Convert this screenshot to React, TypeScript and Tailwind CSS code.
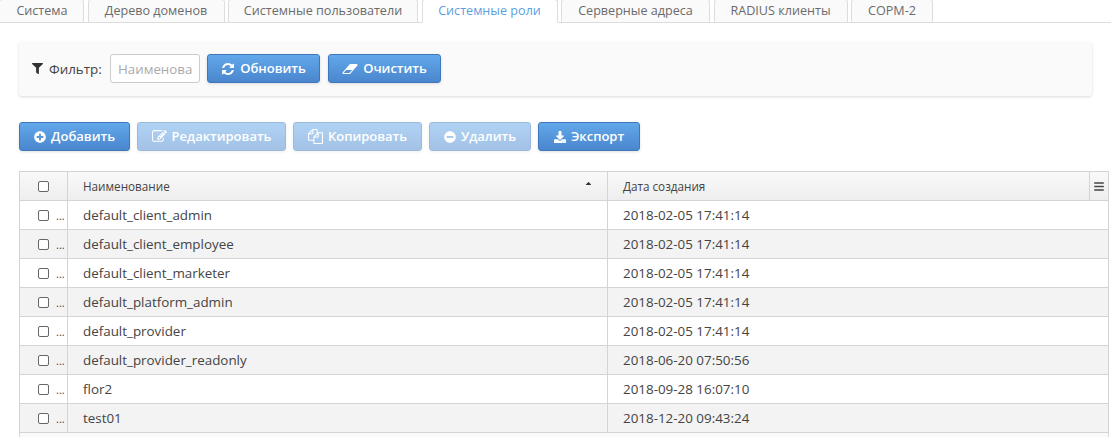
import { FaFilter, FaPlusCircle, FaMinusCircle, FaDownload, FaBars, FaSortUp } from "react-icons/fa";
import type { ReactNode } from "react";

const tabs = [
  ["Система", "w-[85px] -ml-px pl-px"],
  ["Дерево доменов", "w-[137px]"],
  ["Системные пользователи", "w-[190px]"],
  ["Системные роли", "w-[136px]"],
  ["Серверные адреса", "w-[149px]"],
  ["RADIUS клиенты", "w-[134px]"],
  ["СОРМ-2", "w-[82px]"],
];
const rows = [
  ["default_client_admin", "2018-02-05 17:41:14"],
  ["default_client_employee", "2018-02-05 17:41:14"],
  ["default_client_marketer", "2018-02-05 17:41:14"],
  ["default_platform_admin", "2018-02-05 17:41:14"],
  ["default_provider", "2018-02-05 17:41:14"],
  ["default_provider_readonly", "2018-06-20 07:50:56"],
  ["flor2", "2018-09-28 16:07:10"],
  ["test01", "2018-12-20 09:43:24"],
];

function Glyph({ d, w = 1792, h = 1792, cls }: { d: string; w?: number; h?: number; cls: string }) {
  return (
    <svg viewBox={`0 0 ${w} ${h}`} className={cls} fill="currentColor">
      <path d={d} />
    </svg>
  );
}

const refresh = "M1639 1056q0 5-1 7-64 268-268 434.5t-478 166.5q-146 0-282.5-55t-243.5-157l-129 129q-19 19-45 19t-45-19-19-45v-448q0-26 19-45t45-19h448q26 0 45 19t19 45-19 45l-137 137q71 66 161 102t187 36q134 0 250-65t186-179q11-17 53-117 8-23 30-23h192q13 0 22.5 9.5t9.5 22.5zm25-800v448q0 26-19 45t-45 19h-448q-26 0-45-19t-19-45 19-45l138-138q-148-137-349-137-134 0-250 65t-186 179q-11 17-53 117-8 23-30 23h-199q-13 0-22.5-9.5t-9.5-22.5v-7q65-268 270-434.5t480-166.5q146 0 284 55.5t245 156.5l130-129q19-19 45-19t45 19 19 45z";
const eraser = "M960 1408l336-384h-768l-336 384h768zm1013-1077q15 34 9.5 71.5t-30.5 65.5l-896 1024q-38 44-96 44h-768q-38 0-69.5-20.5t-47.5-54.5q-15-34-9.5-71.5t30.5-65.5l896-1024q38-44 96-44h768q38 0 70 20.5t47 54.5z";
const edit = "M888 1184l116-116-152-152-116 116v56h96v96h56zm440-720q-16-16-33 1l-350 350q-17 17-1 33t33-1l350-350q17-17 1-33zm80 594v190q0 119-84.5 203.5t-203.5 84.5h-832q-119 0-203.5-84.5t-84.5-203.5v-832q0-119 84.5-203.5t203.5-84.5h832q63 0 117 25 15 7 18 23 3 17-9 29l-49 49q-14 14-32 8-23-6-45-6h-832q-66 0-113 47t-47 113v832q0 66 47 113t113 47h832q66 0 113-47t47-113v-126q0-13 9-22l64-64q15-15 35-7t20 29zm-96-738l288 288-672 672h-288v-288zm444 132l-92 92-288-288 92-92q28-28 68-28t68 28l152 152q28 28 28 68t-28 68z";
const files = "M1696 384q40 0 68 28t28 68v1216q0 40-28 68t-68 28h-960q-40 0-68-28t-28-68v-288h-544q-40 0-68-28t-28-68v-672q0-40 20-88t48-76l408-408q28-28 76-48t88-20h416q40 0 68 28t28 68v328q68-40 128-40h416zm-544 213l-299 299h299v-299zm-640-384l-299 299h299v-299zm196 647l316-316v-416h-384v416q0 40-28 68t-68 28h-416v640h512v-256q0-40 20-92t48-80zm956 804v-1152h-384v416q0 40-28 68t-68 28h-416v640h896z";

function Btn({ icon, children, off, w }: { icon: ReactNode; children: ReactNode; off?: boolean; w: string }) {
  return (
    <button className={`flex h-[29px] shrink-0 items-center justify-center gap-[5px] rounded-[3px] border border-[#3f78b8] bg-gradient-to-b from-[#62a8ea] to-[#4a86ce] text-[13px] font-semibold text-white shadow-[0_1px_3px_rgba(0,0,0,0.12)] ${w} ${off ? "opacity-50" : ""}`}>
      {icon}
      {children}
    </button>
  );
}

function Box() {
  return <span className="block h-[11px] w-[11px] shrink-0 rounded-[2px] border border-[#666] bg-white" />;
}

export default function App() {
  return (
    <div className="h-[437px] w-[1111px] overflow-hidden bg-white font-['Open_Sans',sans-serif] text-[#444]">
      <div className="flex h-[23px] gap-[3.5px] border-b border-[#ddd]">
        {tabs.map(([t, w], i) => (
          <div key={t} className={`-mt-px flex h-[24px] shrink-0 items-center justify-center rounded-t-[3px] border border-[#ddd] text-[12.6px] ${w} ${i === 3 ? "border-b-white bg-white text-[#5b9fe0]" : "bg-[#fafafa] text-[#6b6b6b]"}`}>
            {t}
          </div>
        ))}
      </div>
      <div className="mx-[19px] mt-[19px] flex h-[54px] items-start rounded-[3px] bg-[#fafafa] pt-[12px] pl-[13px] shadow-[0_1px_3px_rgba(0,0,0,0.15)]">
        <div className="flex h-[29px] w-[78px] shrink-0 items-center pt-px">
          <FaFilter className="-mt-[2px] h-[11px] w-[11px] text-[#333]" />
          <span className="ml-[6px] text-[13.4px]">Фильтр:</span>
        </div>
        <input readOnly placeholder="Наименование" className="h-[29px] w-[90px] rounded-[3px] border border-[#ccc] bg-white pr-[7px] pl-[7px] text-[13.3px] placeholder:text-[#aaa]" />
        <div className="ml-[7px] flex gap-[8px]">
          <Btn w="w-[113px]" icon={<Glyph d={refresh} cls="h-[14px] w-[14px]" />}>Обновить</Btn>
          <Btn w="w-[113px]" icon={<Glyph d={eraser} w={2048} cls="h-[14px] w-[16px]" />}>Очистить</Btn>
        </div>
      </div>
      <div className="mt-[26px] ml-[19px] flex gap-[7px]">
        <Btn w="w-[111px]" icon={<FaPlusCircle className="h-3 w-3" />}>Добавить</Btn>
        <Btn off w="w-[149px]" icon={<Glyph d={edit} cls="h-[15px] w-[15px]" />}>Редактировать</Btn>
        <Btn off w="w-[129px]" icon={<Glyph d={files} cls="h-[15px] w-[15px]" />}>Копировать</Btn>
        <Btn off w="w-[102px]" icon={<FaMinusCircle className="h-3 w-3" />}>Удалить</Btn>
        <Btn w="w-[102px]" icon={<FaDownload className="h-3 w-3" />}>Экспорт</Btn>
      </div>
      <div className="mt-[20px] ml-[19px] w-[1090px] border-x border-t border-[#d4d4d4]">
        <div className="flex h-[29px] items-center border-b border-[#d4d4d4] bg-gradient-to-b from-[#f9f9f9] to-[#eee] text-[11.7px]">
          <div className="flex h-full w-[48px] shrink-0 items-center border-r border-[#d4d4d4] pl-[18px]"><Box /></div>
          <div className="relative flex h-full w-[540px] shrink-0 items-center border-r border-[#d4d4d4] pt-px pl-[15px]">
            Наименование
            <FaSortUp className="absolute top-[9px] right-[14px] h-[9px] w-[9px] text-[#333]" />
          </div>
          <div className="flex h-full flex-1 items-center pt-px pl-[15px]">Дата создания</div>
          <div className="flex h-full w-[19px] items-center justify-center border-l border-[#d4d4d4]"><FaBars className="h-[11px] w-[10px] text-[#444]" /></div>
        </div>
        {rows.map(([n, d], i) => (
          <div key={n} className={`flex h-[29px] items-center border-b border-[#d4d4d4] text-[13.4px] ${i % 2 ? "bg-[#f3f3f3]" : "bg-white"}`}>
            <div className="flex h-full w-[48px] shrink-0 items-center gap-[7px] border-r border-[#d4d4d4] pl-[18px]"><Box /><span className="text-[11px] leading-none">...</span></div>
            <div className="flex h-full w-[540px] shrink-0 items-center border-r border-[#d4d4d4] pl-[15px]">{n}</div>
            <div className="flex h-full flex-1 items-center pl-[15px]">{d}</div>
          </div>
        ))}
        <div className="h-[6px] bg-[#fafafa]" />
      </div>
    </div>
  );
}
